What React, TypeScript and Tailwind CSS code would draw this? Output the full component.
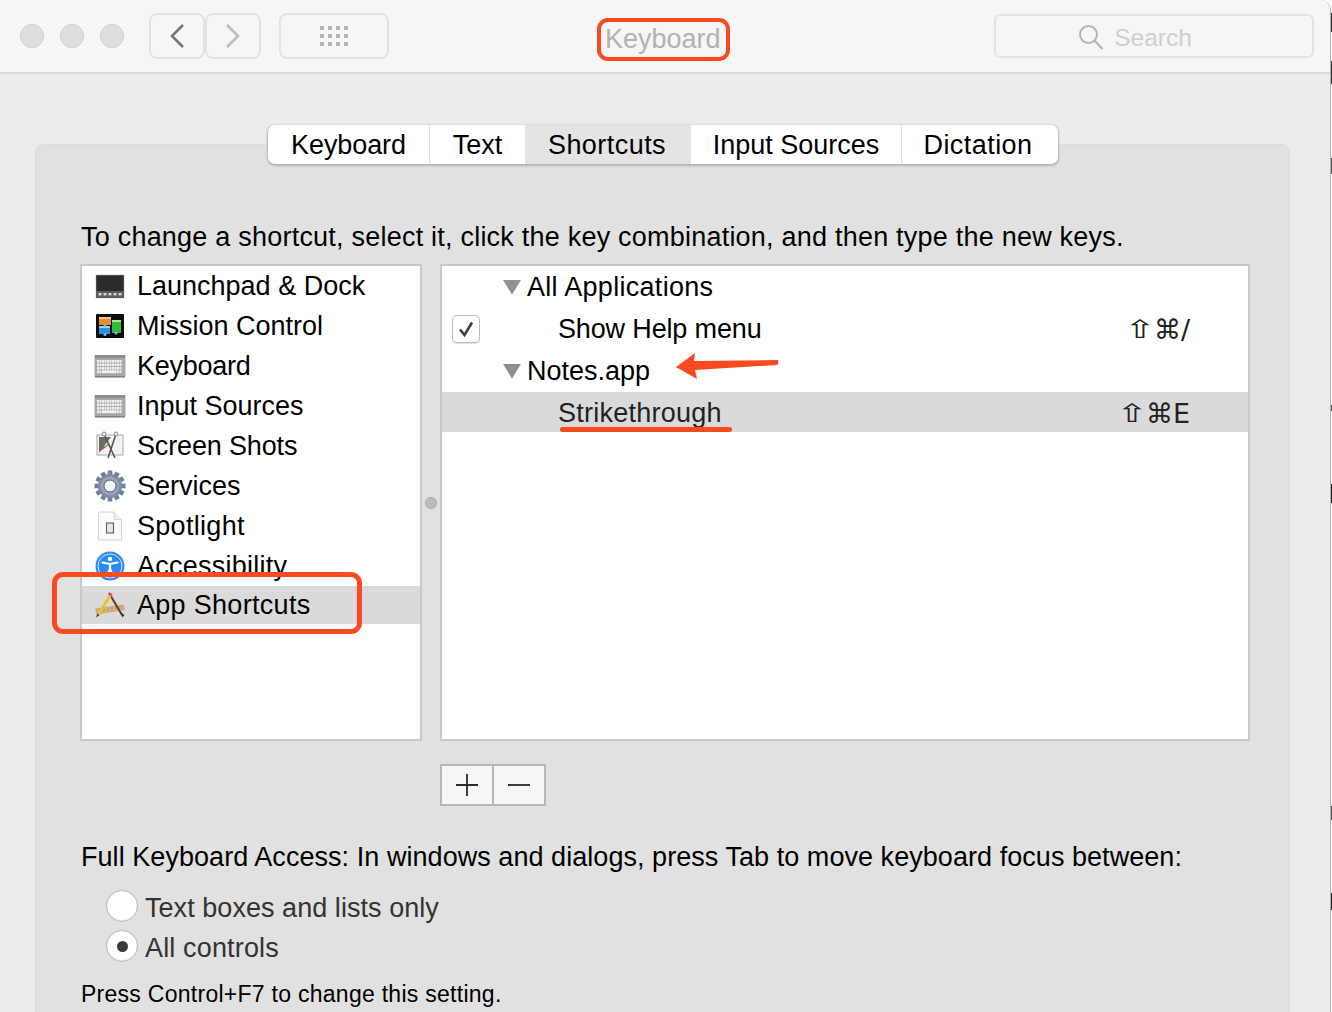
import React from "react";

const font = "[font-family:'Liberation_Sans','Helvetica_Neue',Arial,sans-serif]";
const symbolFont = "[font-family:'DejaVu_Sans','Liberation_Sans',sans-serif]";

const Keyboardish = () => (
	<svg width="32" height="25" viewBox="0 0 32 25">
		<rect x="0.5" y="1" width="31" height="22" rx="1.5" fill="#a8a8a8" />
		<rect x="1" y="1" width="30" height="3" fill="#8f8f8f" />
		<rect x="1" y="22" width="30" height="1.500" fill="#7f7f7f" />
		{[6, 9.5, 13, 16.500].map((y) =>
			[3, 5.500, 8, 10.500, 13, 15.500, 18, 20.500, 23, 25.500].map((x) => (
				<rect fill="#f2f2f2" height="2.600" key={`${x}-${y}`} width="2" x={x} y={y} />
			))
		)}
		<rect x="9" y="16.500" width="13" height="2.600" fill="#f2f2f2" />
	</svg>
);

const Launchpad = () => (
	<svg width="30" height="25" viewBox="0 0 30 25">
		<rect x="1" y="1" width="28" height="23" fill="#2b2b2b" stroke="#aaa" strokeWidth="0.500" />
		<rect x="1" y="17" width="28" height="7" fill="#5c5c5c" />
		{[5, 10, 15, 20, 25].map((x) => (
			<rect fill="#d8d8d8" height="2.400" key={x} width="3" x={x - 1.500} y="19" />
		))}
	</svg>
);

const Mission = () => (
	<svg width="28" height="24" viewBox="0 0 28 24">
		<rect width="28" height="24" rx="1" fill="#0c0c0c" />
		<rect x="3" y="3" width="12" height="8" fill="#ee8a2e" />
		<rect x="3" y="3" width="12" height="2" fill="#f7c68c" />
		<rect x="3" y="12" width="11" height="8" fill="#2c8fe6" />
		<rect x="3" y="12" width="11" height="2" fill="#9fd3f7" />
		<rect x="16" y="6" width="9" height="13" fill="#37b83d" />
		<rect x="16" y="6" width="9" height="2" fill="#a5e59f" />
		<circle cx="9" cy="11.500" r="1.500" fill="#5cc4f4" />
		<circle cx="9" cy="20.500" r="1.500" fill="#5cc4f4" />
		<circle cx="20" cy="19" r="1.500" fill="#5cc4f4" />
	</svg>
);

const ScreenShots = () => (
	<svg width="28" height="30" viewBox="0 0 28 30">
		<rect x="1" y="4" width="26" height="20" fill="#f2f2f2" stroke="#a8a8a8" />
		<path d="M3 22 15 6H3Z" fill="#6b6b6b" />
		<path d="M4 19 9 16" stroke="#d33" strokeWidth="1.500" />
		<path d="M9 16 13 13" stroke="#4a4" strokeWidth="1.500" />
		<path d="M8 3 19 27M20 3 12 27" stroke="#555" strokeWidth="1.600" fill="none" />
		<circle cx="8" cy="3" r="2" fill="#eee" stroke="#888" />
		<circle cx="20" cy="3" r="2" fill="#eee" stroke="#888" />
	</svg>
);

const Gear = () => {
	const teeth = Array.from({ length: 12 }, (_, i) => i * 30);
	return (
		<svg width="32" height="32" viewBox="0 0 32 32">
			{teeth.map((a) => (
				<rect fill="#70809a" height="6" key={a} transform={`rotate(${a} 16 16)`} width="4.600" x="13.700" y="0.500" />
			))}
			<circle cx="16" cy="16" r="12" fill="#7d8ca6" />
			<circle cx="16" cy="16" r="9.500" fill="#94a2b8" />
			<circle cx="16" cy="16" r="6" fill="#f4f4f4" stroke="#56647c" strokeWidth="1" />
		</svg>
	);
};

const Spotlight = () => (
	<svg width="26" height="30" viewBox="0 0 26 30">
		<path d="M1.500 1H17L24.500 8.500V29H1.500Z" fill="#fbfbfb" stroke="#d4d4d4" />
		<path d="M17 1V8.500H24.500" fill="#efefef" stroke="#d4d4d4" />
		<rect x="9.500" y="12" width="7" height="10" fill="#e6e6e6" stroke="#555" strokeWidth="1" />
	</svg>
);

const Accessibility = () => (
	<svg width="30" height="30" viewBox="0 0 30 30">
		<circle cx="15" cy="15" r="14.500" fill="#2a8cf0" />
		<circle cx="15" cy="15" r="12" fill="none" stroke="#cfe6fb" strokeWidth="1" />
		<circle cx="15" cy="8" r="2.200" fill="#fff" />
		<path d="M7.500 11.500 15 13l7.500-1.500M15 13v5M15 18l-3 6.500M15 18l3 6.500" fill="none" stroke="#fff" strokeWidth="2.200" strokeLinecap="round" />
	</svg>
);

const AppShortcuts = () => (
	<svg width="30" height="26" viewBox="0 0 30 26">
		<path d="M0.500 17 28 13l1.500 4.500L2 22Z" fill="#d8b47a" stroke="#a58a5c" strokeWidth="0.500" />
		<path d="M5 17.500v2M9 17v2M13 16.300v2M17 15.700v2M21 15v2M25 14.500v2" stroke="#8d7345" strokeWidth="0.700" />
		<path d="M14 1 27 23" stroke="#6f3424" strokeWidth="2" />
		<path d="M25.500 20.500 27.500 25.500 29.500 23Z" fill="#3a2a20" />
		<path d="M15.500 3 3.500 22.500" stroke="#efbe2e" strokeWidth="3" />
		<path d="M16.500 1.400 15 3.800" stroke="#d85a6a" strokeWidth="3" />
		<path d="M2.300 21.500 1 25.500 4.500 23Z" fill="#3a3a3a" />
	</svg>
);

const sidebar = [
	{ name: "Launchpad & Dock", icon: <Launchpad />, tracking: "" },
	{ name: "Mission Control", icon: <Mission />, tracking: "" },
	{ name: "Keyboard", icon: <Keyboardish />, tracking: "tracking-[-0.25px]" },
	{ name: "Input Sources", icon: <Keyboardish />, tracking: "" },
	{ name: "Screen Shots", icon: <ScreenShots />, tracking: "tracking-[-0.15px]" },
	{ name: "Services", icon: <Gear />, tracking: "" },
	{ name: "Spotlight", icon: <Spotlight />, tracking: "tracking-[0.3px]" },
	{ name: "Accessibility", icon: <Accessibility />, tracking: "tracking-[0.25px]" },
	{ name: "App Shortcuts", icon: <AppShortcuts />, tracking: "tracking-[0.3px]", selected: true },
];

const tabs = [
	{ name: "Keyboard", width: "w-[162px]", tracking: "tracking-[-0.1px]" },
	{ name: "Text", width: "w-[95px]", tracking: "" },
	{ name: "Shortcuts", width: "w-[166px] pr-[2px]", tracking: "tracking-[0.45px]", selected: true },
	{ name: "Input Sources", width: "w-[211px]", tracking: "" },
	{ name: "Dictation", width: "w-[156px] pr-[4px]", tracking: "tracking-[0.45px]" },
];

const Triangle = () => (
	<svg width="18" height="16" viewBox="0 0 18 16" className="shrink-0">
		<path d="M0 1H18L9 15.500Z" fill="#8f8f8f" />
	</svg>
);

const Radio = ({ checked }: { checked?: boolean }) => (
	<div className="flex size-[32px] shrink-0 items-center justify-center rounded-full border border-[#b9b9b9] bg-white shadow-[inset_0_-1px_1px_#e8e8e8]">
		{checked && <div className="size-[11px] rounded-full bg-[#3a3a3a]" />}
	</div>
);

// the installed fonts only have a narrow shift arrow, so it gets stretched to the reference's width
const ShiftGlyph = () => (
	<span className="mr-[4px] flex w-[20px] scale-x-[1.55] justify-center text-[25px] [font-family:'DejaVu_Sans',sans-serif]">⇧</span>
);

export default function App() {
	return (
		<div className={`relative h-[1012px] w-[1332px] overflow-hidden bg-white text-[27px] leading-none text-black ${font}`}>
			<div className="h-[1012px] w-[1331px] overflow-hidden rounded-tr-[10px] border-r border-[#b0b0b0] bg-[#ececec]">
				{/* toolbar */}
				<div className="flex h-[74px] items-start border-b-2 border-[#d9d9d9] bg-[#f6f6f6]">
					<div className="mt-[24px] ml-[20px] flex gap-[16px]">
						<div className="size-[24px] rounded-full border border-[#cfcfcf] bg-[#dedede]" />
						<div className="size-[24px] rounded-full border border-[#cfcfcf] bg-[#dedede]" />
						<div className="size-[24px] rounded-full border border-[#cfcfcf] bg-[#dedede]" />
					</div>
					<div className="mt-[13px] ml-[25px] flex">
						<div className="flex h-[46px] w-[56px] items-center justify-center rounded-[8px] border-2 border-[#e3e3e3]">
							<svg width="16" height="26" viewBox="0 0 16 26">
								<path d="M14 2 3 13l11 11" fill="none" stroke="#757575" strokeWidth="2.600" />
							</svg>
						</div>
						<div className="flex h-[46px] w-[56px] items-center justify-center rounded-[8px] border-2 border-[#e3e3e3]">
							<svg width="16" height="26" viewBox="0 0 16 26">
								<path d="M2 2l11 11L2 24" fill="none" stroke="#bcbcbc" strokeWidth="2.600" />
							</svg>
						</div>
					</div>
					<div className="mt-[13px] ml-[18px] flex h-[46px] w-[110px] items-center justify-center rounded-[8px] border-2 border-[#e3e3e3]">
						<svg width="30" height="22" viewBox="0 0 30 22" fill="#b4b4b4">
							{[0, 8, 16].map((y) =>
								[1, 9, 17, 25].map((x) => <rect height="4" key={`${x}-${y}`} width="4" x={x} y={y + 1} />)
							)}
						</svg>
					</div>
					<div className="mt-[22px] ml-[216px] text-[27px] leading-[34px] text-[#b2b2b2]">Keyboard</div>
					<div className="mt-[14px] ml-[273px] flex h-[44px] w-[320px] items-center justify-center gap-[10px] rounded-[6px] border-2 border-[#e3e3e3] pt-[2px] pr-[37px] text-[#cfcfcf]">
						<svg width="26" height="26" viewBox="0 0 26 26">
							<circle cx="10.500" cy="10.500" r="8.500" fill="none" stroke="#b5b5b5" strokeWidth="2" />
							<path d="M16.500 16.500 24.500 25" stroke="#b5b5b5" strokeWidth="2.200" />
						</svg>
						<span className="pt-[2px] text-[24.500px]">Search</span>
					</div>
				</div>

				{/* preference pane */}
				<div className="mt-[70px] ml-[35px] h-[900px] w-[1255px] rounded-t-[8px] border border-[#dcdcdc] bg-[#e1e1e1]">
					<div className="-mt-[20px] ml-[232px] flex h-[39px] w-fit overflow-hidden rounded-[7px] bg-white shadow-[0_1px_2px_1px_#b5b5b5]">
						{tabs.map((tab, i) => (
							<div
								className={`flex h-full items-center justify-center pt-[2px] ${tab.width} ${tab.tracking} ${
									tab.selected ? "bg-[#e4e4e4]" : i === 0 || i === 3 ? "border-r border-[#dedede]" : ""
								}`}
								key={tab.name}
							>
								{tab.name}
							</div>
						))}
					</div>

					<div className="mt-[57px] ml-[45px] leading-[32px] tracking-[0.22px]">
						To change a shortcut, select it, click the key combination, and then type the new keys.
					</div>

					<div className="mt-[11px] ml-[44px] flex items-stretch">
						<div className="h-[477px] w-[342px] border-2 border-[#c9c9c9] bg-white">
							{sidebar.map((item) => (
								<div
									className={`flex items-center ${item.selected ? "h-[38px] bg-[#dadada]" : "h-[40px]"}`}
									key={item.name}
								>
									<div className="flex w-[55px] shrink-0 justify-center pl-[1px]">{item.icon}</div>
									<span className={item.tracking}>{item.name}</span>
								</div>
							))}
						</div>
						<div className="flex w-[18px] items-center justify-center">
							<div className="size-[12px] rounded-full border border-[#a9a9a9] bg-[#bcbcbc]" />
						</div>
						<div className="h-[477px] w-[810px] border-2 border-[#c9c9c9] bg-white">
							<div className="flex h-[42px] items-center pl-[61px]">
								<Triangle />
								<span className="ml-[6px] tracking-[0.3px]">All Applications</span>
							</div>
							<div className="flex h-[42px] items-center pl-[10px]">
								<div className="flex size-[28px] items-center justify-center rounded-[5px] border border-[#bdbdbd] bg-white shadow-[0_1px_1px_#dddddd]">
									<svg width="18" height="18" viewBox="0 0 18 18">
										<path d="M3 9.500 7.500 15 15 2.500" fill="none" stroke="#3f3f3f" strokeWidth="2.600" />
									</svg>
								</div>
								<span className="ml-[78px] tracking-[-0.15px]">Show Help menu</span>
								<span className={`ml-auto flex items-center pr-[58px] text-[#222] ${symbolFont}`}>
									<ShiftGlyph />
									<span>⌘</span>
									<span>/</span>
								</span>
							</div>
							<div className="flex h-[42px] items-center pl-[61px]">
								<Triangle />
								<span className="ml-[6px]">Notes.app</span>
							</div>
							<div className="flex h-[40px] items-center bg-[#dadada] pt-[2px] pl-[116px] text-[#222]">
								<span className="tracking-[0.25px]">Strikethrough</span>
								<span className={`ml-auto flex items-center pr-[58px] ${symbolFont}`}>
									<ShiftGlyph />
									<span>⌘</span>
									<span>E</span>
								</span>
							</div>
						</div>
					</div>

					<div className="mt-[23px] ml-[404px] flex h-[42px] w-[106px] border-2 border-[#b7b7b7] bg-[#f6f6f6]">
						<div className="flex w-[52px] items-center justify-center border-r-2 border-[#b7b7b7]">
							<svg width="24" height="24" viewBox="0 0 24 24">
								<path d="M12 1V23M1 12H23" stroke="#2a2a2a" strokeWidth="1.800" />
							</svg>
						</div>
						<div className="flex flex-1 items-center justify-center">
							<svg width="24" height="24" viewBox="0 0 24 24">
								<path d="M1 12H23" stroke="#2a2a2a" strokeWidth="1.800" />
							</svg>
						</div>
					</div>

					<div className="mt-[35px] ml-[45px] leading-[32px] tracking-[0.05px]">
						Full Keyboard Access: In windows and dialogs, press Tab to move keyboard focus between:
					</div>
					<div className="mt-[17px] ml-[70px] flex flex-col gap-[8px] text-[#333]">
						<div className="flex items-center gap-[7px]">
							<Radio />
							<span className="pt-[4px] tracking-[0.05px]">Text boxes and lists only</span>
						</div>
						<div className="flex items-center gap-[7px]">
							<Radio checked />
							<span className="pt-[4px] tracking-[0.15px]">All controls</span>
						</div>
					</div>
					<div className="mt-[18px] ml-[45px] text-[23px] leading-[28px] tracking-[0.27px]">
						Press Control+F7 to change this setting.
					</div>
				</div>
			</div>

			{/* red annotations drawn on top of the screenshot */}
			<div className="absolute top-[18px] left-[597px] h-[43px] w-[133px] rounded-[11px] border-[4px] border-[#fc4a20]" />
			<div className="absolute top-[572px] left-[52px] h-[62px] w-[310px] rounded-[11px] border-[5px] border-[#fc4a20]" />
			<div className="absolute top-[427px] left-[560px] h-[5px] w-[172px] rounded-full bg-[#fc4a20]" />
			<svg className="absolute top-[350px] left-[670px]" width="112" height="32" viewBox="0 0 112 32">
				<path d="M6 17 25 3 24 11 108 10Q109 13 107 15L25 20 27 29Z" fill="#fc4a20" />
			</svg>

			{/* bits of the window behind, showing past the right edge */}
			<div className="absolute top-[13px] right-0 h-[19px] w-px bg-[#333]" />
			<div className="absolute top-[61px] right-0 h-[23px] w-px bg-[#333]" />
			<div className="absolute top-[158px] right-0 h-[16px] w-px bg-[#555]" />
			<div className="absolute top-[405px] right-0 h-[6px] w-px bg-[#444]" />
			<div className="absolute top-[484px] right-0 h-[19px] w-px bg-[#222]" />
			<div className="absolute top-[806px] right-0 h-[14px] w-px bg-[#555]" />
			<div className="absolute top-[893px] right-0 h-[17px] w-px bg-[#222]" />
		</div>
	);
}
